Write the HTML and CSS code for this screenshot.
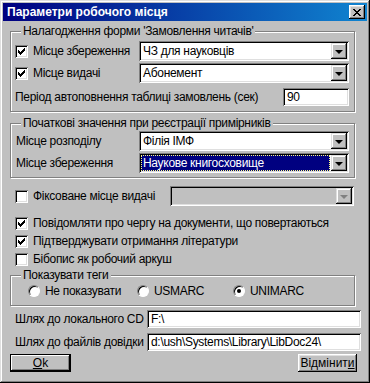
FILE: index.html
```html
<!DOCTYPE html>
<html lang="uk">
<head>
    <meta charset="UTF-8">
    <title>Параметри робочого місця</title>
    <link rel="stylesheet" href="styles.css">
</head>
<body>

<div class="window">
    <div class="titlebar">
        <span class="title">Параметри робочого місця</span>
        <span class="close-btn">
            <svg width="8" height="7" viewBox="0 0 8 7" shape-rendering="crispEdges"><path d="M0 0h2v1h-2zM6 0h2v1h-2zM1 1h2v1h-2zM5 1h2v1h-2zM2 2h4v1h-4zM3 3h2v1h-2zM2 4h4v1h-4zM1 5h2v1h-2zM5 5h2v1h-2zM0 6h2v1h-2zM6 6h2v1h-2z" fill="#000"/></svg>
        </span>
    </div>

    <div class="client">
        <fieldset class="group group-orders">
            <legend>Налагодження форми 'Замовлення читачів'</legend>
            <div class="row">
                <label class="check"><span class="box"><svg class="tick" width="7" height="7" viewBox="0 0 7 7" shape-rendering="crispEdges"><path d="M6 0h1v3h-1zM5 1h1v3h-1zM4 2h1v3h-1zM3 3h1v3h-1zM2 4h1v3h-1zM1 3h1v3h-1zM0 2h1v3h-1z" fill="#000"/></svg></span>Місце збереження</label>
                <div class="combo"><span class="combo-text">ЧЗ для науковців</span><span class="drop"><i class="arrow"></i></span></div>
            </div>
            <div class="row">
                <label class="check"><span class="box"><svg class="tick" width="7" height="7" viewBox="0 0 7 7" shape-rendering="crispEdges"><path d="M6 0h1v3h-1zM5 1h1v3h-1zM4 2h1v3h-1zM3 3h1v3h-1zM2 4h1v3h-1zM1 3h1v3h-1zM0 2h1v3h-1z" fill="#000"/></svg></span>Місце видачі</label>
                <div class="combo"><span class="combo-text">Абонемент</span><span class="drop"><i class="arrow"></i></span></div>
            </div>
            <div class="row row-period">
                <span class="caption">Період автоповнення таблиці замовлень (сек)</span>
                <div class="edit edit-short">90</div>
            </div>
        </fieldset>

        <fieldset class="group group-copies">
            <legend>Початкові значення при реєстрації примірників</legend>
            <div class="row">
                <span class="caption">Місце розподілу</span>
                <div class="combo"><span class="combo-text">Філія ІМФ</span><span class="drop"><i class="arrow"></i></span></div>
            </div>
            <div class="row">
                <span class="caption">Місце збереження</span>
                <div class="combo combo-focus"><span class="combo-text">Наукове книгосховище</span><span class="drop"><i class="arrow"></i></span></div>
            </div>
        </fieldset>

        <div class="row row-fixed">
            <label class="check"><span class="box"></span>Фіксоване місце видачі</label>
            <div class="combo combo-disabled"><span class="combo-text"></span><span class="drop"><i class="arrow"></i></span></div>
        </div>

        <div class="options">
            <label class="check"><span class="box"><svg class="tick" width="7" height="7" viewBox="0 0 7 7" shape-rendering="crispEdges"><path d="M6 0h1v3h-1zM5 1h1v3h-1zM4 2h1v3h-1zM3 3h1v3h-1zM2 4h1v3h-1zM1 3h1v3h-1zM0 2h1v3h-1z" fill="#000"/></svg></span>Повідомляти про чергу на документи, що повертаються</label>
            <label class="check"><span class="box"><svg class="tick" width="7" height="7" viewBox="0 0 7 7" shape-rendering="crispEdges"><path d="M6 0h1v3h-1zM5 1h1v3h-1zM4 2h1v3h-1zM3 3h1v3h-1zM2 4h1v3h-1zM1 3h1v3h-1zM0 2h1v3h-1z" fill="#000"/></svg></span>Підтверджувати отримання літератури</label>
            <label class="check"><span class="box"></span>Бібопис як робочий аркуш</label>
        </div>

        <fieldset class="group group-tags">
            <legend>Показувати теги</legend>
            <div class="radios">
                <label class="radio radio-none"><span class="dot"></span>Не показувати</label>
                <label class="radio radio-us"><span class="dot"></span>USMARC</label>
                <label class="radio radio-uni"><span class="dot on"></span>UNIMARC</label>
            </div>
        </fieldset>

        <div class="row row-path">
            <span class="caption">Шлях до локального CD</span>
            <div class="edit edit-path">F:\</div>
        </div>
        <div class="row row-path">
            <span class="caption">Шлях до файлів довідки</span>
            <div class="edit edit-path">d:\ush\Systems\Library\LibDoc24\</div>
        </div>

        <div class="buttons">
            <button class="btn btn-default"><u>O</u>k</button>
            <button class="btn btn-cancel">Відмінит<u>и</u></button>
        </div>
    </div>
</div>

</body>
</html>
```

FILE: styles.css
```css
body { margin: 0; background: #c0c0c0; font-family: "Liberation Sans", Arial, sans-serif; font-size: 12px; letter-spacing: -0.3px; color: #000; white-space: nowrap; }

.window { width: 370px; height: 383px; box-sizing: border-box; padding: 3px; background: #c0c0c0; overflow: hidden;
    box-shadow: inset -1px -1px #000, inset 1px 1px #dfdfdf, inset -2px -2px #808080, inset 2px 2px #fff; }

.titlebar { height: 18px; display: flex; align-items: center; justify-content: space-between; padding-left: 4px;
    background: linear-gradient(90deg, #000080, #1084d0); color: #fff; }
.title { font-weight: bold; font-size: 12px; letter-spacing: 0; }
.close-btn { width: 16px; height: 14px; margin-right: 2px; display: flex; align-items: center; justify-content: center; background: #c0c0c0;
    box-shadow: inset -1px -1px #000, inset 1px 1px #fff, inset -2px -2px #808080, inset 2px 2px #dfdfdf; }

.client { padding: 3px 0 0 7px; }

.group { margin: 0; width: 345px; box-sizing: border-box; padding: 0 5px 4px 4px; border: 1px solid #808080;
    box-shadow: inset 1px 1px #fff, 1px 1px #fff; }
.group legend { padding: 0 2px; margin-left: 6px; line-height: 15px; background: #c0c0c0; }
.group-orders { padding-bottom: 5px; }
.group-copies { margin-top: 4px; padding-bottom: 4px; }
.group-tags { margin-top: 0; padding-bottom: 6px; }

.row { display: flex; align-items: center; justify-content: space-between; }
.group .row + .row { margin-top: 2px; }
.group-orders .row:first-of-type { margin-top: 2px; }
.group-orders .row.row-period { margin-top: 5px; }

.check { display: flex; align-items: center; }
.box { width: 13px; height: 13px; flex: none; box-sizing: border-box; margin-right: 5px; background: #fff; display: flex; align-items: center; justify-content: center;
    box-shadow: inset 1px 1px #808080, inset -1px -1px #fff, inset 2px 2px #000, inset -2px -2px #dfdfdf; }
.group-copies .caption { padding-left: 1px; }

.combo { width: 210px; height: 20px; flex: none; box-sizing: border-box; padding: 2px; display: flex; align-items: center; background: #fff;
    box-shadow: inset 1px 1px #808080, inset -1px -1px #fff, inset 2px 2px #000, inset -2px -2px #dfdfdf; }
.combo-text { flex: 1; height: 16px; line-height: 16px; padding-left: 2px; overflow: hidden; }
.combo-focus .combo-text { background: #000080; color: #fff; outline: 1px dotted #ffff80; outline-offset: -1px; margin-right: 1px; }
.combo-disabled { width: 184px; background: #c0c0c0; }
.drop { width: 16px; height: 16px; flex: none; display: flex; align-items: center; justify-content: center; background: #c0c0c0;
    box-shadow: inset -1px -1px #000, inset 1px 1px #dfdfdf, inset -2px -2px #808080, inset 2px 2px #fff; }
.arrow { width: 0; height: 0; border-left: 4px solid transparent; border-right: 4px solid transparent; border-top: 4px solid #000; margin-top: 1px; }
.combo-disabled .arrow { border-top-color: #808080; }

.edit { height: 18px; flex: none; box-sizing: border-box; padding: 0 4px; line-height: 18px; background: #fff;
    box-shadow: inset 1px 1px #808080, inset -1px -1px #fff, inset 2px 2px #000, inset -2px -2px #dfdfdf; }
.edit-short { width: 66px; }

.row-fixed { width: 339px; margin: 8px 0 0 5px; }

.options { margin: 8px 0 0 5px; }
.options .check { height: 18px; }

.radios { display: flex; height: 16px; align-items: center; padding-left: 13px; }
.radio { display: flex; align-items: center; }
.radio-none { width: 109px; }
.radio-us { width: 96px; }
.dot { width: 12px; height: 12px; flex: none; box-sizing: border-box; border-radius: 50%; margin-right: 5px; background: #fff; display: flex; align-items: center; justify-content: center;
    border: 1px solid; border-color: #808080 #fff #fff #808080; box-shadow: inset 1px 1px #000; }
.dot.on::after { content: ""; width: 4px; height: 4px; border-radius: 50%; background: #000; }

.row-path { width: 346px; margin: 4px 0 0 5px; }
.row-path + .row-path { margin-top: 5px; }
.edit-path { width: 214px; }

.buttons { display: flex; justify-content: space-between; width: 347px; margin-top: 3px; }
.btn { font: inherit; height: 18px; padding: 0; border: 0; background: #c0c0c0; color: #000;
    box-shadow: inset -1px -1px #000, inset 1px 1px #fff, inset -2px -2px #808080, inset 2px 2px #dfdfdf; }
.btn-default { width: 61px; box-shadow: inset 0 0 0 1px #000, inset -2px -2px #000, inset 2px 2px #fff, inset -3px -3px #808080; }
.btn-cancel { width: 59px; }
```
